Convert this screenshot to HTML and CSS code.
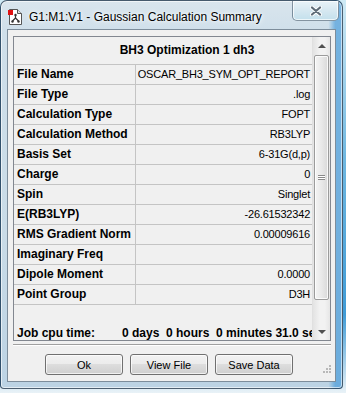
FILE: index.html
```html
<!DOCTYPE html>
<html lang="en">
<head>
  <meta charset="UTF-8" />
  <title>G1:M1:V1 - Gaussian Calculation Summary</title>
  <link rel="stylesheet" href="styles.css">
</head>
<body>
  <div class="window">
    <div class="titlebar">
      <svg class="app-icon" width="14" height="16" viewBox="0 0 14 16">
        <path d="M1.5 0.5 H9.5 L13.5 4.5 V15.5 H1.5 Z" fill="#fff" stroke="#555"/>
        <path d="M9.5 0.5 V4.5 H13.5" fill="#ddd" stroke="#555"/>
        <rect x="0" y="1" width="5" height="5" fill="#e01010"/>
        <path d="M7.5 6 V9 M7.5 9 L4.5 12 M7.5 9 L10.5 12" stroke="#333" stroke-width="1.2" fill="none"/>
        <circle cx="7.5" cy="6" r="1.2" fill="#333"/>
        <circle cx="4.5" cy="12.5" r="1.2" fill="#333"/>
        <circle cx="10.5" cy="12.5" r="1.2" fill="#333"/>
      </svg>
      <span class="title">G1:M1:V1 - Gaussian Calculation Summary</span>
      <div class="close-btn">
        <svg width="12" height="10" viewBox="0 0 12 10">
          <path d="M2 1.5 L10 8.5 M10 1.5 L2 8.5" stroke="#fff" stroke-width="4" stroke-linecap="round"/>
          <path d="M2 1.5 L10 8.5 M10 1.5 L2 8.5" stroke="#5e6c78" stroke-width="2.2" stroke-linecap="round"/>
        </svg>
      </div>
    </div>

    <div class="client">
      <div class="grid">
        <div class="grid-body">
          <div class="grid-header">BH3 Optimization 1 dh3</div>
          <div class="row"><div class="label">File Name</div><div class="value">OSCAR_BH3_SYM_OPT_REPORT</div></div>
          <div class="row"><div class="label">File Type</div><div class="value">.log</div></div>
          <div class="row"><div class="label">Calculation Type</div><div class="value">FOPT</div></div>
          <div class="row"><div class="label">Calculation Method</div><div class="value">RB3LYP</div></div>
          <div class="row"><div class="label">Basis Set</div><div class="value">6-31G(d,p)</div></div>
          <div class="row"><div class="label">Charge</div><div class="value">0</div></div>
          <div class="row"><div class="label">Spin</div><div class="value">Singlet</div></div>
          <div class="row"><div class="label">E(RB3LYP)</div><div class="value">-26.61532342</div></div>
          <div class="row"><div class="label">RMS Gradient Norm</div><div class="value">0.00009616</div></div>
          <div class="row"><div class="label">Imaginary Freq</div><div class="value"></div></div>
          <div class="row"><div class="label">Dipole Moment</div><div class="value">0.0000</div></div>
          <div class="row"><div class="label">Point Group</div><div class="value">D3H</div></div>
          <div class="cpu-time"><span class="cpu-label">Job cpu time:</span><span class="cpu-value">0 days  0 hours  0 minutes 31.0 seconds</span></div>
        </div>
        <div class="scrollbar">
          <div class="scroll-arrow"><span class="arrow-up"></span></div>
          <div class="scroll-track">
            <div class="scroll-thumb"><span class="thumb-grip"></span></div>
          </div>
          <div class="scroll-arrow"><span class="arrow-down"></span></div>
        </div>
      </div>

      <div class="separator"></div>

      <div class="buttons">
        <button class="btn">Ok</button>
        <button class="btn">View File</button>
        <button class="btn">Save Data</button>
      </div>

      <svg class="size-grip" width="10" height="10" viewBox="0 0 10 10">
        <rect x="8" y="2" width="2" height="2" fill="#b8b8b8"/>
        <rect x="5" y="5" width="2" height="2" fill="#b8b8b8"/>
        <rect x="8" y="5" width="2" height="2" fill="#b8b8b8"/>
        <rect x="2" y="8" width="2" height="2" fill="#b8b8b8"/>
        <rect x="5" y="8" width="2" height="2" fill="#b8b8b8"/>
        <rect x="8" y="8" width="2" height="2" fill="#b8b8b8"/>
      </svg>
    </div>
  </div>
</body>
</html>
```

FILE: styles.css
```css
body {
  margin: 0;
  width: 346px;
  height: 393px;
  overflow: hidden;
  background: linear-gradient(to bottom, #cfeaf5 0%, #6fb7e0 40%, #3f9bd6 80%, #e9f2f7 100%);
  font-family: "Liberation Sans", Arial, sans-serif;
}

.window {
  position: relative;
  box-sizing: border-box;
  width: 343px;
  height: 389px;
  border: 1px solid rgba(30, 50, 70, 0.75);
  border-radius: 7px 7px 4px 4px;
  background:
    linear-gradient(to right, rgba(255,255,255,0) 96%, rgba(40,140,215,0.55) 98%),
    linear-gradient(to bottom, #d9e5ed 0%, #cfdfea 8%, #c9dbe7 60%, #bcd3e4 100%);
  box-shadow: inset 0 0 0 1px rgba(255,255,255,0.6);
}

.titlebar {
  display: flex;
  align-items: flex-start;
  height: 28px;
  padding-left: 7px;
}

.app-icon {
  margin-top: 8px;
}

.title {
  margin-left: 7px;
  margin-top: 9px;
  font-size: 12px;
  color: #000;
  text-shadow: 0 0 6px #fff, 0 0 3px #fff;
}

.close-btn {
  display: flex;
  align-items: center;
  justify-content: center;
  margin-left: auto;
  margin-right: 3px;
  width: 47px;
  height: 20px;
  box-sizing: border-box;
  border: 1px solid rgba(50, 70, 90, 0.55);
  border-top: none;
  border-radius: 0 0 5px 5px;
  background: linear-gradient(to bottom, #e9f3f8 0%, #d6e8f1 50%, #c3e0ec 100%);
  box-shadow: inset 0 0 0 1px rgba(255,255,255,0.7);
}

.client {
  position: relative;
  box-sizing: border-box;
  width: 329px;
  height: 353px;
  margin-left: 6px;
  border: 1px solid #7d8d9b;
  background: #f0f0f0;
  padding: 6px 0 0 5px;
}

.grid {
  display: flex;
  box-sizing: border-box;
  width: 318px;
  height: 305px;
  border: 1px solid #828790;
  background: #f0f0f0;
}

.grid-body {
  width: 299px;
  overflow: hidden;
}

.grid-header {
  height: 27px;
  line-height: 27px;
  border-bottom: 1px solid #c4c4c4;
  padding-left: 48px;
  text-align: center;
  font-size: 12px;
  font-weight: bold;
}

.row {
  display: grid;
  grid-template-columns: 122px 1fr;
  height: 19px;
  border-bottom: 1px solid #c4c4c4;
  font-size: 12px;
  line-height: 19px;
}

.label {
  border-right: 1px solid #c4c4c4;
  padding-left: 3px;
  font-weight: bold;
  white-space: nowrap;
}

.value {
  padding-right: 2px;
  text-align: right;
  font-size: 11px;
  letter-spacing: -0.2px;
  white-space: nowrap;
}

.cpu-time {
  display: flex;
  padding: 21px 0 0 3px;
  font-size: 12px;
  font-weight: bold;
  line-height: 14px;
  white-space: pre;
}

.cpu-label {
  flex-shrink: 0;
  width: 105px;
}

.cpu-value {
  flex-shrink: 0;
}

.scrollbar {
  display: flex;
  flex-direction: column;
  width: 17px;
  background: linear-gradient(to right, #e3e3e3, #f2f2f2 40%, #f2f2f2 70%, #e6e6e6);
  border-left: 1px solid #e0e0e0;
}

.scroll-arrow {
  display: flex;
  align-items: center;
  justify-content: center;
  height: 17px;
}

.arrow-up,
.arrow-down {
  width: 0;
  height: 0;
  border-left: 4px solid transparent;
  border-right: 4px solid transparent;
}

.arrow-up {
  border-bottom: 4px solid #505050;
}

.arrow-down {
  border-top: 4px solid #505050;
}

.scroll-track {
  flex: 1;
  padding-top: 1px;
}

.scroll-thumb {
  display: flex;
  align-items: center;
  justify-content: center;
  box-sizing: border-box;
  height: 245px;
  margin: 0 1px;
  border: 1px solid #9b9b9b;
  border-radius: 2px;
  background: linear-gradient(to right, #f4f4f4, #e9e9e9 50%, #d9d9d9);
  box-shadow: inset 0 0 0 1px rgba(255,255,255,0.8);
}

.thumb-grip {
  width: 7px;
  height: 5px;
  background: repeating-linear-gradient(to bottom, #8a8a8a 0 1px, #ffffff 1px 2px);
}

.separator {
  width: 318px;
  height: 1px;
  margin-top: 3px;
  border-top: 1px solid #a0a0a0;
  background: #fff;
}

.buttons {
  display: flex;
  gap: 7px;
  margin-top: 8px;
  padding-left: 32px;
}

.btn {
  width: 78px;
  height: 21px;
  padding: 0;
  border: 1px solid #707070;
  border-radius: 3px;
  background: linear-gradient(to bottom, #f2f2f2 0%, #ebebeb 49%, #dddddd 50%, #cfcfcf 100%);
  box-shadow: inset 0 0 0 1px rgba(255,255,255,0.7);
  font-family: "Liberation Sans", Arial, sans-serif;
  font-size: 11px;
  color: #000;
}

.size-grip {
  position: absolute;
  right: 4px;
  bottom: 8px;
}
```
